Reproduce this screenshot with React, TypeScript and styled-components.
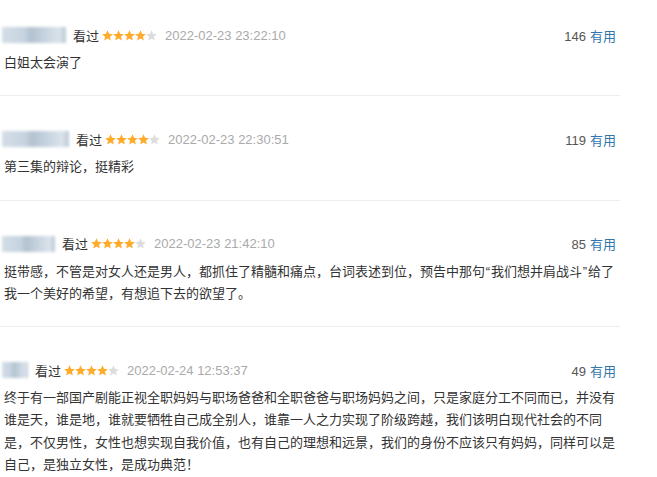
import React from 'react'
import styled, { createGlobalStyle } from 'styled-components'

const GlobalStyle = createGlobalStyle`
  body {
    margin: 0;
    background: #fff;
    font-family: "Liberation Sans", Arial, "Noto Sans CJK SC", sans-serif;
    font-size: 13px;
    color: #333;
  }
`

const List = styled.div`
  width: 620px;
`

const Item = styled.div`
  padding: 32px 0 21px;
  border-bottom: 1px solid #eee;

  &:first-child {
    padding-top: 24px;
  }
`

const Header = styled.div`
  display: flex;
  align-items: center;
  height: 22px;
  padding: 0 4px 0 2px;
`

const Name = styled.span<{ $w: number }>`
  display: inline-block;
  width: ${({ $w }) => $w}px;
  height: 16px;
  margin-right: 7px;
  background: linear-gradient(
    90deg,
    #d3dde7 0%,
    #c6d3df 35%,
    #b3c2d0 45%,
    #c9d5e1 70%,
    #dbe3eb 90%,
    #b8c6d4 100%
  );
  filter: blur(1.5px);
`

const Watched = styled.span`
  color: #333;
  margin-right: 3px;
`

const Stars = styled.span`
  display: inline-flex;
  margin-right: 8px;
`

const Date = styled.span`
  color: #aaa;
`

const Votes = styled.span`
  margin-left: auto;
  color: #555;
`

const Useful = styled.span`
  color: #37a;
  margin-left: 4px;
`

const Content = styled.p`
  margin: 6px 0 0;
  padding: 0 4px;
  line-height: 22.3px;
  color: #333;
`

const Quote = styled.span`
  display: inline-flex;
  justify-content: center;
  width: 6px;
  font-family: "Liberation Sans", Arial, sans-serif;
`

function Star({ on }: { on: boolean }) {
  return (
    <svg width="11" height="11" viewBox="1 1.2 22 21.5">
      <path
        d="M12 1.5l3.1 7.1 7.6.7-5.8 5 1.8 7.5L12 17.8l-6.7 4 1.8-7.5-5.8-5 7.6-.7z"
        fill={on ? '#ffac2d' : '#ddd'}
      />
    </svg>
  )
}

type Review = {
  nameW: number
  rating: number
  date: string
  votes: number
  text: React.ReactNode
}

const reviews: Review[] = [
  { nameW: 64, rating: 4, date: '2022-02-23 23:22:10', votes: 146, text: '白姐太会演了' },
  { nameW: 67, rating: 4, date: '2022-02-23 22:30:51', votes: 119, text: '第三集的辩论，挺精彩' },
  {
    nameW: 53,
    rating: 4,
    date: '2022-02-23 21:42:10',
    votes: 85,
    text: (
      <>
        挺带感，不管是对女人还是男人，都抓住了精髓和痛点，台词表述到位，预告中那句<Quote>“</Quote>我们想并肩战斗<Quote>”</Quote>给了我一个美好的希望，有想追下去的欲望了。
      </>
    ),
  },
  {
    nameW: 26,
    rating: 4,
    date: '2022-02-24 12:53:37',
    votes: 49,
    text: '终于有一部国产剧能正视全职妈妈与职场爸爸和全职爸爸与职场妈妈之间，只是家庭分工不同而已，并没有谁是天，谁是地，谁就要牺牲自己成全别人，谁靠一人之力实现了阶级跨越，我们该明白现代社会的不同是，不仅男性，女性也想实现自我价值，也有自己的理想和远景，我们的身份不应该只有妈妈，同样可以是自己，是独立女性，是成功典范！',
  },
]

export default function App() {
  return (
    <>
      <GlobalStyle />
      <List>
        {reviews.map((r, i) => (
          <Item key={i}>
            <Header>
              <Name $w={r.nameW} />
              <Watched>看过</Watched>
              <Stars>
                {[0, 1, 2, 3, 4].map((s) => (
                  <Star key={s} on={s < r.rating} />
                ))}
              </Stars>
              <Date>{r.date}</Date>
              <Votes>
                {r.votes}
                <Useful>有用</Useful>
              </Votes>
            </Header>
            <Content>{r.text}</Content>
          </Item>
        ))}
      </List>
    </>
  )
}
